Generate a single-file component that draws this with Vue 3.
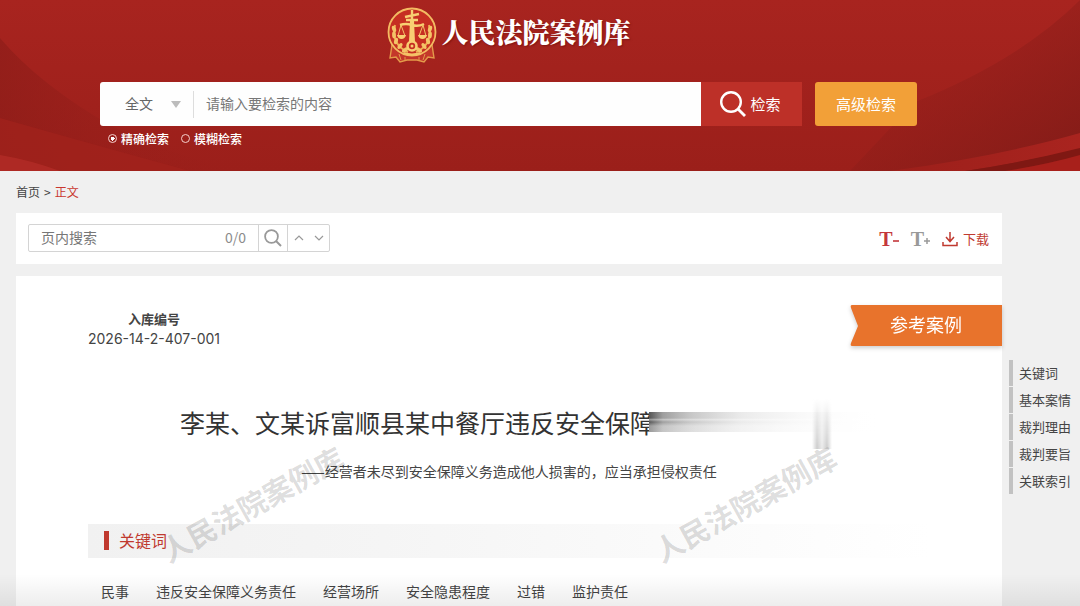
<script setup>
import { ref } from 'vue'

const scope = ref('全文')
const query = ref('')
const mode = ref('exact')
const pageQuery = ref('')

const keywords = ['民事', '违反安全保障义务责任', '经营场所', '安全隐患程度', '过错', '监护责任']
const sections = ['关键词', '基本案情', '裁判理由', '裁判要旨', '关联索引']
const leaves = [
  [7, 22, 70], [7, 28, 85], [9, 34, 105], [13, 39, 125], [18, 43, 145],
  [43, 22, 110], [43, 28, 95], [41, 34, 75], [37, 39, 55], [32, 43, 35]
]
</script>

<template>
  <div class="page">
    <header class="hero">
      <svg class="hero-art" viewBox="0 0 1080 171" preserveAspectRatio="none" aria-hidden="true">
        <defs>
          <linearGradient id="base" x1="0" y1="0" x2="0" y2="1">
            <stop offset="0" stop-color="#a8241f" />
            <stop offset="1" stop-color="#9b1f1a" />
          </linearGradient>
          <linearGradient id="leftShade" x1="0" y1="0" x2="1" y2="0">
            <stop offset="0" stop-color="#8a1c18" stop-opacity=".6" />
            <stop offset="1" stop-color="#9b1f1a" stop-opacity="0" />
          </linearGradient>
          <linearGradient id="rightShade" x1="0" y1="0" x2="1" y2="1">
            <stop offset="0" stop-color="#981f1b" stop-opacity="0" />
            <stop offset="1" stop-color="#7f1b17" stop-opacity=".9" />
          </linearGradient>
          <linearGradient id="fold" x1="0" y1="0" x2="1" y2="0">
            <stop offset="0" stop-color="#9c1f1a" />
            <stop offset="1" stop-color="#a9241f" />
          </linearGradient>
        </defs>
        <rect width="1080" height="171" fill="url(#base)" />
        <path d="M0 38Q40 85 110 125Q170 155 240 171H0Z" fill="url(#leftShade)" />
        <path d="M0 118Q70 138 190 171H0Z" fill="#a3221d" opacity=".7" />
        <path d="M0 155Q30 160 60 171H0Z" fill="#b52e28" opacity=".7" />
        <path d="M1080 0Q1020 60 915 102L850 171H1080Z" fill="url(#rightShade)" />
        <path d="M890 171Q1000 156 1080 133V149Q1020 163 965 171Z" fill="url(#fold)" />
        <path d="M965 171Q1020 163 1080 148V156L1010 171Z" fill="#7f1813" />
        <path d="M1005 171Q1045 165 1080 155V171Z" fill="#a8201b" />
      </svg>
      <div class="hero-inner">
        <div class="brand">
          <svg class="emblem" viewBox="0 0 50 56" aria-hidden="true">
            <path d="M5 38L3 51L9 50L13 55L20 53H30L37 55L41 50L47 51L45 38Z" fill="#c4382a" stroke="#e39a4a" stroke-width="1.4" />
            <path d="M12 47L14 53M38 47L36 53M18 50V53M32 50V53" stroke="#e39a4a" />
            <circle cx="25" cy="25" r="23.5" fill="#c62f22" stroke="#f3bb62" stroke-width="1.8" />
            <path d="M8 18Q4 38 21 45M42 18Q46 38 29 45" fill="none" stroke="#eeb052" stroke-width="2" />
            <ellipse v-for="(l, i) in leaves" :key="i" :cx="l[0]" :cy="l[1]" rx="3.4" ry="1.9"
              :transform="`rotate(${l[2]} ${l[0]} ${l[1]})`" fill="#f4c468" />
            <path d="M25 3V34M18 10L32 7M19 13H31M13 18Q19 16 25 18Q31 20 37 17" fill="none" stroke="#f8cf72" stroke-width="2.4" />
            <path d="M23 14H27L28 35H22Z" fill="#f8cf72" />
            <path d="M14 18L11 29M14 18L18 29M36 18L32 29M36 18L39 29" fill="none" stroke="#f4c468" />
            <path d="M10 28H19Q18 32 14.500 32T10 28ZM31 28H40Q39 32 35.500 32T31 28Z" fill="#f8cf72" />
            <circle cx="25" cy="39" r="4.500" fill="#c62f22" stroke="#f8cf72" stroke-width="2.600" />
            <circle cx="25" cy="39" r="1.500" fill="#f8cf72" />
            <path d="M17 46Q25 49 33 46" fill="none" stroke="#f4c468" stroke-width="2" />
          </svg>
          <span class="brand-name">人民法院案例库</span>
        </div>

        <form class="search" @submit.prevent>
          <div class="search-box">
            <div class="scope">
              <select v-model="scope" aria-label="检索范围">
                <option>全文</option>
              </select>
              <svg viewBox="0 0 10 7" aria-hidden="true"><path d="M0 0H10L5 7Z" fill="#bcbcbc" /></svg>
            </div>
            <input v-model="query" class="query" type="text" placeholder="请输入要检索的内容" aria-label="检索内容" />
          </div>
          <button class="go" type="submit">
            <svg viewBox="0 0 26 26" aria-hidden="true">
              <circle cx="11" cy="11" r="9.800" fill="none" stroke="#fff" stroke-width="2.400" />
              <path d="M18 18L25 25" stroke="#fff" stroke-width="2.800" />
            </svg>
            <span>检索</span>
          </button>
          <button class="advanced" type="button">高级检索</button>
        </form>

        <div class="modes">
          <label><input v-model="mode" type="radio" name="mode" value="exact" />精确检索</label>
          <label><input v-model="mode" type="radio" name="mode" value="fuzzy" />模糊检索</label>
        </div>
      </div>
    </header>

    <nav class="crumbs" aria-label="面包屑">
      <a href="#">首页</a><span class="sep">&gt;</span><a href="#" class="current">正文</a>
    </nav>

    <div class="body">
      <main>
        <div class="toolbar">
          <div class="find">
            <input v-model="pageQuery" type="text" placeholder="页内搜索" aria-label="页内搜索" />
            <span class="count">0/0</span>
            <button type="button" class="find-go" aria-label="搜索">
              <svg viewBox="0 0 18 18" width="18" height="18" aria-hidden="true">
                <circle cx="7.500" cy="7.500" r="6.400" fill="none" stroke="#999" stroke-width="1.800" />
                <path d="M12 12L17 17" stroke="#999" stroke-width="2" />
              </svg>
            </button>
            <div class="steps">
              <button type="button" aria-label="上一个">
                <svg viewBox="0 0 10 6" width="10" height="6" aria-hidden="true"><path d="M1 5L5 1L9 5" fill="none" stroke="#999" stroke-width="1.200" /></svg>
              </button>
              <button type="button" aria-label="下一个">
                <svg viewBox="0 0 10 6" width="10" height="6" aria-hidden="true"><path d="M1 1L5 5L9 1" fill="none" stroke="#999" stroke-width="1.200" /></svg>
              </button>
            </div>
          </div>
          <div class="tools">
            <button type="button" class="size smaller" aria-label="缩小字号">T<svg viewBox="0 0 6 8" width="6" height="8" aria-hidden="true"><path d="M0 4H6" stroke="currentColor" stroke-width="1.600" /></svg></button>
            <button type="button" class="size" aria-label="放大字号">T<svg viewBox="0 0 6 8" width="6" height="8" aria-hidden="true"><path d="M0 4H6M3 1V7" stroke="currentColor" stroke-width="1.500" /></svg></button>
            <button type="button" class="download">
              <svg viewBox="0 0 16 16" width="16" height="16" aria-hidden="true">
                <path d="M8 1V10M4 6L8 10.500L12 6M1 11V14.500H15V11" fill="none" stroke="#c03a30" stroke-width="1.500" />
              </svg>
              下载
            </button>
          </div>
        </div>

        <article class="card">
          <span class="watermark first" aria-hidden="true">人民法院案例库</span>
          <span class="watermark second" aria-hidden="true">人民法院案例库</span>
          <div class="meta">
            <div class="number">
              <b>入库编号</b>
              <span>2026-14-2-407-001</span>
            </div>
            <div class="ribbon">
              <svg viewBox="0 0 152 41" preserveAspectRatio="none" aria-hidden="true">
                <path d="M2 0H152V41H2Q0 41 1 38L8 21L1 3Q0 0 2 0Z" fill="#e8732c" />
              </svg>
              <span>参考案例</span>
            </div>
          </div>
          <h1>李某、文某诉富顺县某中餐厅违反安全保障<span class="smear"></span></h1>
          <p class="subtitle">——经营者未尽到安全保障义务造成他人损害的，应当承担侵权责任</p>
          <h2>关键词</h2>
          <ul class="keywords">
            <li v-for="k in keywords" :key="k">{{ k }}</li>
          </ul>
        </article>
      </main>

      <nav class="anchors" aria-label="目录">
        <a v-for="s in sections" :key="s" href="#">{{ s }}</a>
      </nav>
    </div>
    <div class="bottom-shade"></div>
  </div>
</template>

<style>
body {
  margin: 0;
  background: #f0f0f0;
}
</style>

<style scoped>
.page,
button,
input,
select {
  font-family: "Noto Sans CJK SC", "Noto Sans", sans-serif;
}
.page {
  position: relative;
  display: flex;
  flex-direction: column;
  height: 100vh;
  overflow: hidden;
  color: #444;
  background: #f0f0f0;
}
* {
  box-sizing: border-box;
}
button {
  padding: 0;
  border: 0;
  background: none;
  cursor: pointer;
}
a {
  color: inherit;
  text-decoration: none;
}

.hero {
  position: relative;
  flex: none;
  padding: 7px 163px 24px 100px;
}
.hero-art {
  position: absolute;
  inset: 0;
  width: 100%;
  height: 100%;
}
.hero-inner {
  position: relative;
}
.brand {
  display: flex;
  justify-content: center;
  gap: 5px;
  height: 75px;
}
.emblem {
  width: 50px;
  height: 56px;
}
.brand-name {
  color: #fff;
  font-family: "Noto Serif CJK SC", "Noto Sans CJK SC", serif;
  font-size: 27px;
  font-weight: 900;
  line-height: 50px;
  text-shadow: 1px 1px 2px rgba(90, 0, 0, 0.5);
}
.search {
  display: flex;
  height: 44px;
}
.search-box {
  display: flex;
  flex: 1;
  align-items: center;
  min-width: 0;
  border-radius: 3px 0 0 3px;
  background: #fefefe;
}
.scope {
  display: flex;
  flex: none;
  align-items: center;
  width: 94px;
  height: 27px;
  padding: 0 12px 0 25px;
  border-right: 1px solid #ddd;
}
.scope select {
  flex: 1;
  min-width: 0;
  padding: 0 0 2px;
  border: 0;
  appearance: none;
  background: none;
  color: #666;
  font-size: 14px;
}
.scope svg {
  width: 10px;
  height: 7px;
}
.query {
  flex: 1;
  min-width: 0;
  height: 100%;
  padding: 0 12px 2px;
  border: 0;
  background: none;
  font-size: 14px;
  outline: none;
}
.query::placeholder {
  color: #777;
}
.go {
  display: flex;
  flex: none;
  align-items: center;
  justify-content: center;
  gap: 4px;
  width: 101px;
  padding: 0 2px 0 0;
  background: #bd3028;
  color: #fff;
  font-size: 15px;
}
.go span,
.advanced {
  padding-bottom: 2px;
}
.go svg {
  width: 26px;
  height: 26px;
}
.advanced {
  flex: none;
  width: 102px;
  margin-left: 13px;
  border-radius: 3px;
  background: #f2a038;
  color: #fff;
  font-size: 15px;
}
.modes {
  display: flex;
  gap: 12px;
  padding: 4px 0 0 8px;
  color: #fff;
  font-size: 12px;
  font-weight: 500;
  line-height: 17px;
}
.modes label {
  display: flex;
  align-items: center;
  gap: 4px;
}
.modes input {
  width: 9px;
  height: 9px;
  margin: 0;
  border: 1px solid #f5cfcb;
  border-radius: 50%;
  appearance: none;
}
.modes input:checked {
  background: radial-gradient(circle, #fff 0 2px, transparent 2px);
}

.crumbs {
  display: flex;
  flex: none;
  align-items: center;
  height: 42px;
  padding: 0 16px 2px;
  font-size: 12px;
}
.sep {
  margin: 0 4px;
}
.current {
  color: #c9382f;
}

.body {
  display: flex;
  flex: 1;
  gap: 7px;
  min-height: 0;
  padding-left: 16px;
}
main {
  display: flex;
  flex: 1;
  flex-direction: column;
  gap: 12px;
  min-width: 0;
}
.toolbar {
  display: flex;
  flex: none;
  align-items: center;
  justify-content: space-between;
  height: 51px;
  padding: 0 13px 2px 12px;
  background: #fff;
}
.find {
  display: flex;
  align-items: center;
  width: 302px;
  height: 28px;
  border: 1px solid #d4d4d4;
  border-radius: 2px;
}
.find input {
  flex: 1;
  min-width: 0;
  padding: 0 0 2px 12px;
  border: 0;
  background: none;
  font-size: 14px;
  outline: none;
}
.find input::placeholder {
  color: #777;
}
.count {
  padding: 0 12px 2px 0;
  color: #8c8c8c;
  font-size: 14px;
}
.find-go,
.steps {
  display: flex;
  align-items: center;
  justify-content: center;
  height: 100%;
  border-left: 1px solid #d4d4d4;
}
.find-go {
  width: 29px;
}
.steps {
  width: 42px;
  gap: 10px;
}
.steps button {
  display: flex;
}
.tools {
  display: flex;
  align-items: center;
  gap: 12px;
  padding-top: 2px;
}
.size {
  display: flex;
  align-items: center;
  color: #999;
  font-family: "Liberation Serif", serif;
  font-size: 20px;
  font-weight: 700;
  line-height: 24px;
}
.size svg {
  margin-top: 4px;
}
.smaller {
  color: #c4373b;
}
.download {
  display: flex;
  align-items: center;
  gap: 5px;
  color: #c03a30;
  font-size: 13px;
}

.card {
  position: relative;
  flex: 1;
  min-height: 0;
  padding: 29px 0 0 72px;
  background: #fff;
}
.meta {
  display: flex;
  justify-content: space-between;
}
.number {
  display: flex;
  flex-direction: column;
  align-items: center;
  padding-top: 4px;
  font-size: 13px;
  line-height: 20px;
}
.number b {
  font-weight: 600;
}
.number span {
  font-family: Inter, sans-serif;
  font-size: 14px;
}
.ribbon {
  position: relative;
  width: 152px;
  height: 41px;
  filter: drop-shadow(0 2px 2px rgba(0, 0, 0, 0.2));
  color: #fff;
  font-size: 18px;
  line-height: 38px;
  text-align: center;
}
.ribbon svg {
  position: absolute;
  inset: 0;
  width: 100%;
  height: 100%;
}
.ribbon span {
  position: relative;
}
h1 {
  display: flex;
  align-items: center;
  margin: 54px 0 0 92px;
  color: #333;
  font-size: 25px;
  font-weight: 400;
  line-height: 38px;
  white-space: nowrap;
}
.smear {
  position: relative;
  width: 232px;
  height: 34px;
  margin-left: -6px;
  background:
    linear-gradient(to right, transparent, #fff) center / 100% 20px no-repeat,
    linear-gradient(to bottom, transparent 0 30%, rgba(255, 255, 255, 0.4) 38%, transparent 50%, rgba(255, 255, 255, 0.4) 70%) center / 100% 20px no-repeat,
    linear-gradient(to right, #555 0, #999 6%, #bbb 18%, #ddd 40%, #f0f0f0 70%, #fff 100%) center / 100% 20px no-repeat,
    #fff;
}
.smear::after {
  position: absolute;
  top: -6px;
  right: 49px;
  z-index: 1;
  width: 20px;
  height: 50px;
  background: linear-gradient(to right, transparent, #aaa 25%, #ddd 50%, #aaa 75%, transparent);
  content: "";
  mask-image: linear-gradient(to bottom, transparent, rgba(0, 0, 0, 0.6));
}
.subtitle {
  margin: 20px 72px 0 0;
  font-size: 14px;
  line-height: 20px;
  text-align: center;
}
h2 {
  display: flex;
  align-items: center;
  gap: 10px;
  height: 34px;
  margin: 43px 72px 0 0;
  padding: 0 0 2px 16px;
  background: linear-gradient(to right, #f1f1f1, #f5f5f5 35%, #fff);
  color: #c0392f;
  font-size: 16px;
  font-weight: 400;
}
h2::before {
  width: 5px;
  height: 19px;
  background: #c0392f;
  content: "";
}
.keywords {
  display: flex;
  gap: 27px;
  margin: 23px 0 0;
  padding: 0 0 0 13px;
  font-size: 14px;
  line-height: 20px;
  list-style: none;
}
.watermark {
  position: absolute;
  top: 207px;
  color: rgba(0, 0, 0, 0.14);
  font-size: 29px;
  font-weight: 700;
  line-height: 40px;
  white-space: nowrap;
  transform: rotate(-29deg);
}
.first {
  left: 134px;
}
.second {
  left: 627px;
}

.anchors {
  display: flex;
  flex: none;
  flex-direction: column;
  gap: 1px;
  width: 71px;
  padding-top: 147px;
  font-size: 13px;
  line-height: 26px;
}
.anchors a {
  padding-left: 6px;
  border-left: 4px solid #c2c2c2;
  white-space: nowrap;
}
.bottom-shade {
  position: absolute;
  right: 0;
  bottom: 0;
  left: 0;
  height: 32px;
  background: linear-gradient(to bottom, transparent, rgba(0, 0, 0, 0.07));
  pointer-events: none;
}
</style>
